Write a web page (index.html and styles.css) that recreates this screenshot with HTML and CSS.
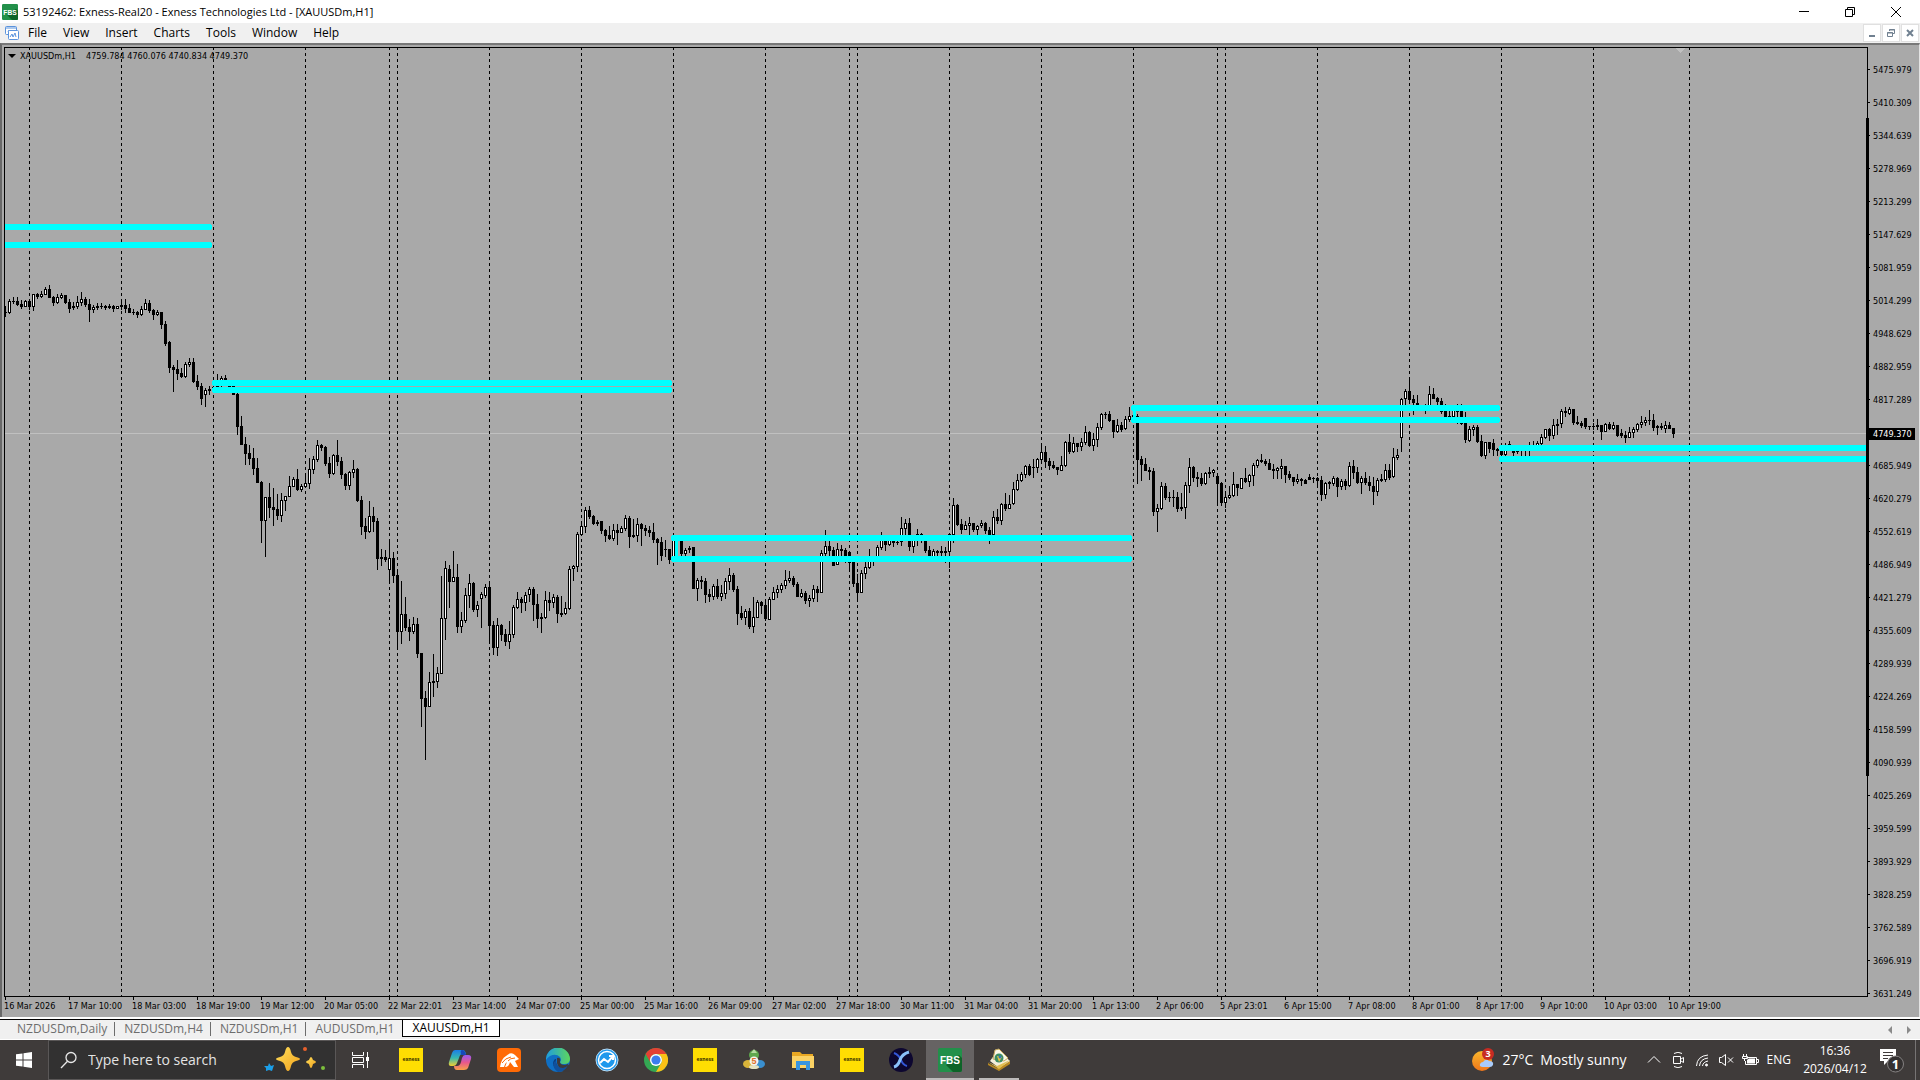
FILE: index.html
```html
<!DOCTYPE html>
<html lang="en">
<head>
<meta charset="utf-8">
<title>53192462: Exness-Real20 - Exness Technologies Ltd - [XAUUSDm,H1]</title>
<link rel="stylesheet" href="styles.css">
</head>
<body>
<svg class="symbols" aria-hidden="true">
  <symbol id="fbs" viewBox="0 0 24 24">
    <rect width="24" height="24" rx="2" fill="#22904a"/>
    <path d="M8 17 L21 7 L24 10 V22 Q24 24 22 24 H15 Z" fill="#0d6428"/>
    <text x="12" y="16" text-anchor="middle" class="fbs-text">FBS</text>
  </symbol>
  <symbol id="exness" viewBox="0 0 24 24">
    <rect width="24" height="24" fill="#ffde02"/>
    <text x="12" y="13" text-anchor="middle" class="exness-text">exness</text>
  </symbol>
</svg>

<header class="titlebar">
  <svg class="app-icon"><use href="#fbs"/></svg>
  <h1 class="title">53192462: Exness-Real20 - Exness Technologies Ltd - [XAUUSDm,H1]</h1>
  <div class="window-buttons">
    <button class="window-button" aria-label="Minimize"><svg width="12" height="12"><path d="M1 5.500H11" /></svg></button>
    <button class="window-button" aria-label="Restore"><svg width="12" height="12"><path d="M1.500 3.500H8.500V10.500H1.500ZM3.500 3V1.500H10.500V8.500H9"/></svg></button>
    <button class="window-button" aria-label="Close"><svg width="12" height="12"><path d="M1 1L11 11M11 1L1 11"/></svg></button>
  </div>
</header>

<nav class="menubar">
  <svg class="mdi-icon" width="16" height="16" viewBox="0 0 16 16" fill="#fff" stroke="#5b93dc">
    <rect x="1.500" y="1.500" width="11" height="8" rx="1"/><path d="M1.500 3H12.500M4 7l1-2 1 2 1-2"/>
    <rect x="4.500" y="5.500" width="10" height="9" rx="1"/><path d="M6 12l2-3 1 3 2-4 1 4" fill="none"/>
  </svg>
  <button class="menu">File</button><button class="menu">View</button><button class="menu">Insert</button><button class="menu">Charts</button><button class="menu">Tools</button><button class="menu">Window</button><button class="menu">Help</button>
  <div class="mdi-buttons">
    <button class="mdi-button" aria-label="Minimize chart"><svg width="10" height="10"><path d="M2 8H8" stroke-width="2"/></svg></button>
    <button class="mdi-button" aria-label="Restore chart"><svg width="10" height="10"><path d="M1.500 4.500H6.500V8.500H1.500ZM1 5H7M3.500 3V1.500H8.500V5.500H7M3 2H9"/></svg></button>
    <button class="mdi-button" aria-label="Close chart"><svg width="10" height="10"><path d="M2 2L8 8M8 2L2 8" stroke-width="2"/></svg></button>
  </div>
</nav>

<main class="chart">
  <section class="plot" aria-label="XAUUSDm H1 price chart">
    <svg class="canvas" id="canvas">
      <path d="M0 385.500H4000" stroke="#c0c0c0"/>
      <path id="days" stroke="#000" stroke-dasharray="3 3" stroke-dashoffset="1"/>
      <path id="dark" fill="#000"/>
      <path id="light" fill="#fff"/>
      <g stroke="#0ff" stroke-width="6" stroke-linecap="round">
        <path d="M-9 179H204M-9 197H204"/>
        <path d="M210 335H664M210 342H664"/>
        <path d="M669 490H1124M669 511H1124"/>
        <path d="M1129 360H1492M1129 372H1492"/>
        <path d="M1497 400H4000M1497 411H4000"/>
      </g>
      <path d="M671 493V508M1129.500 362V370" stroke="#0ff" stroke-width="3"/>
      <path d="M1670 0H1680L1675 5Z" fill="#c0c0c0"/>
    </svg>
    <p class="quote"><svg width="8" height="4"><path d="M0 0H8L4 4Z"/></svg><span>XAUUSDm,H1</span><span class="ohlc">4759.784 4760.076 4740.834 4749.370</span></p>
    <div class="range-bar"></div>
  </section>
  <ol class="prices" id="prices">
  </ol>
  <output class="last-price">4749.370</output>
  <ol class="times" id="times"></ol>
</main>

<nav class="tabs">
  <a class="tab" href="#">NZDUSDm,Daily</a><a class="tab" href="#">NZDUSDm,H4</a><a class="tab" href="#">NZDUSDm,H1</a><a class="tab" href="#">AUDUSDm,H1</a><a class="tab current" href="#">XAUUSDm,H1</a>
  <div class="scrollers">
    <button class="scroller" aria-label="Previous tabs"><svg width="4" height="8"><path d="M4 0V8L0 4Z"/></svg></button>
    <button class="scroller" aria-label="Next tabs"><svg width="4" height="8"><path d="M0 0V8L4 4Z"/></svg></button>
  </div>
</nav>

<footer class="taskbar">
  <button class="start" aria-label="Start"><svg width="16" height="16" fill="#fff"><path d="M0 2.300L6.500 1.400V7.500H0ZM7.500 1.200L16 0V7.500H7.500ZM0 8.500H6.500V14.600L0 13.700ZM7.500 8.500H16V16L7.500 14.800Z"/></svg></button>
  <label class="search">
    <svg width="18" height="18" fill="none" stroke="#e8e8e8" stroke-width="1.300"><circle cx="11" cy="6.500" r="5"/><path d="M7.500 10.200L1 17"/></svg>
    <input class="search-input" type="text" placeholder="Type here to search" aria-label="Search">
    <svg width="62" height="28" viewBox="0 0 62 28">
      <defs><linearGradient id="gold" x2="1" y2="1"><stop offset="0" stop-color="#ffe05c"/><stop offset="1" stop-color="#f0a01c"/></linearGradient></defs>
      <path d="M24 1Q26 1 27 6Q28 10 32 11Q36 12 36 13T32 15Q28 16 27 20Q26 25 24 25T21 20Q20 16 16 15Q12 14 12 13T16 11Q20 10 21 6Q22 1 24 1Z" fill="url(#gold)"/>
      <path d="M47 11Q48 11 49 14Q52 15 52 16T49 18Q48 22 47 22T45 18Q42 17 42 16T45 14Q46 11 47 11Z" fill="url(#gold)"/>
      <path d="M5 17L7 20L10 19L9 22L8 25L5 24L2 25L2 22L0 20L4 20Z" fill="#1c9fe8"/>
      <circle cx="41" cy="3" r="2" fill="#e8602c"/><circle cx="59" cy="22" r="2" fill="#7cbf3c"/>
    </svg>
  </label>
  <button class="task-view" aria-label="Task View"><svg width="18" height="16" fill="none" stroke="#fff"><path d="M1.500 0V3.500H12.500V0M1.500 16V12.500H12.500V16M1.500 5.500H12.500V10.500H1.500ZM16.500 0V16"/><path d="M15 5H18V9H15Z" fill="#fff" stroke="none"/></svg></button>
  <div class="apps">
    <button class="app" aria-label="Exness"><svg><use href="#exness"/></svg></button>
    <button class="app" aria-label="Copilot"><svg viewBox="0 0 24 24">
      <defs><linearGradient id="cp1" x2="0" y2="1"><stop offset="0" stop-color="#1b7de8"/><stop offset=".5" stop-color="#36b8b0"/><stop offset="1" stop-color="#f3cf30"/></linearGradient><linearGradient id="cp2" x2="0" y2="1"><stop offset="0" stop-color="#9a5af0"/><stop offset=".5" stop-color="#e8588c"/><stop offset="1" stop-color="#f8a048"/></linearGradient></defs>
      <path d="M7 2H15Q17 2 18 6H14Q12 6 11 10L9 15Q8 18 5 18H3Q0 18 1 14L4 5Q5 2 7 2Z" fill="url(#cp1)"/>
      <path d="M14 2Q17 2 18 7H13Q12 2 14 2Z" fill="#1748b8"/>
      <path d="M17 7H20Q24 7 23 11L20 20Q19 22 16 22H9Q6 22 6 18H9Q12 18 13 14L14 10Q15 7 17 7Z" fill="url(#cp2)"/>
    </svg></button>
    <button class="app" aria-label="Lion trader"><svg viewBox="0 0 24 24"><rect width="24" height="24" rx="4" fill="#ff6a06"/><path d="M3 19Q4 11 9 8Q14 3 18 7L22 11L18 13L21 19H17L13 14Q12 19 8 19L10 14Q8 15 7 19Z" fill="#fff"/><path d="M5 15Q8 10 14 9M11 13Q13 10 18 10" fill="none" stroke="#ff6a06"/></svg></button>
    <button class="app" aria-label="Edge"><svg viewBox="0 0 24 24">
      <defs><linearGradient id="ed"><stop offset="0" stop-color="#1e9de0"/><stop offset="1" stop-color="#5ed65c"/></linearGradient></defs>
      <circle cx="12" cy="12" r="12" fill="#0f6fc4"/><path d="M0 12A12 12 0 0 1 24 11Q24 16 18 16Q14 16 14 14Q16 12 14 9Q10 5 4 8Q1 10 0 12Z" fill="url(#ed)"/>
      <path d="M9 11Q5 15 9 20Q13 24 20 20Q14 21 11 17Q9 14 10 11Z" fill="#0b3f82"/><path d="M11 10Q15 9 14 14Q14 17 19 17L22 16L24 19V24H19Q12 20 11 15Z" fill="#3d393a"/><path d="M10 13Q10 20 17 20Q20 20 22 17Q19 24 12 24Q6 20 8 14Z" fill="#10509c"/>
    </svg></button>
    <button class="app" aria-label="Market"><svg viewBox="0 0 24 24"><circle cx="12" cy="12" r="11" fill="#1e98ec" stroke="#b9dcf5"/><circle cx="12" cy="12" r="8.500" fill="none" stroke="#fff" stroke-width="1.500"/><path d="M5 15L9 11L13 14L18 8M14 8H18V12" fill="none" stroke="#fff" stroke-width="2"/></svg></button>
    <button class="app" aria-label="Chrome"><svg viewBox="0 0 24 24"><circle cx="12" cy="12" r="12" fill="#34a853"/><path d="M1.600 6A12 12 0 0 1 22.400 6H12A6 6 0 0 0 6.800 15Z" fill="#e34133"/><path d="M22.400 6A12 12 0 0 1 12 24L17.200 15A6 6 0 0 0 12 6Z" fill="#fbc116"/><circle cx="12" cy="12" r="6" fill="#fff"/><circle cx="12" cy="12" r="4.600" fill="#3b7ded"/></svg></button>
    <button class="app" aria-label="Exness terminal"><svg><use href="#exness"/></svg></button>
    <button class="app" aria-label="MetaTrader 5"><svg viewBox="0 0 24 24"><circle cx="12" cy="7" r="5" fill="#5fa84e"/><path d="M12 1L15 5H9Z" fill="#b7dca2"/><ellipse cx="6" cy="16" rx="5" ry="4" fill="#d9b43a"/><ellipse cx="18" cy="16" rx="5" ry="4" fill="#3a8fcf"/><ellipse cx="12" cy="19" rx="5" ry="2" fill="#e7e2c0"/><circle cx="12" cy="13" r="4.500" fill="#f4f4ee"/><text x="12" y="16" text-anchor="middle" class="mt-text">5</text></svg></button>
    <button class="app" aria-label="File Explorer"><svg viewBox="0 0 24 24"><path d="M1 4H9L11 6H22V20H1Z" fill="#e9a823"/><path d="M1 8H23V20H1Z" fill="#fbd264"/><path d="M5 13H19V22H15V17H9V22H5Z" fill="#3795e0"/></svg></button>
    <button class="app" aria-label="Exness trader"><svg><use href="#exness"/></svg></button>
    <button class="app" aria-label="X terminal"><svg viewBox="0 0 24 24"><circle cx="12" cy="12" r="12" fill="#0d0730"/><path d="M5 5Q10 7 12 12T18 18" fill="none" stroke="#3457d8" stroke-width="2"/><path d="M20 4Q13 6 11 12T5 19" fill="none" stroke="#8ac0fb" stroke-width="3"/></svg></button>
    <button class="app active" aria-label="FBS terminal"><svg><use href="#fbs"/></svg></button>
    <button class="app open" aria-label="MetaEditor"><svg viewBox="0 0 24 24"><path d="M1 15L10 20L23 13V16L12 23L1 17Z" fill="#b98a22"/><path d="M3 13L11 2L23 13L12 20Z" fill="#f3eed8"/><path d="M1 14L10 18L23 12L12 21Z" fill="#e2bf52"/><path d="M8 2L12 1L21 10L17 13L6 11Z" fill="#fbf8e8" stroke="#c3a75c"/><circle cx="12" cy="10" r="4.500" fill="#3d8e62"/><path d="M10 8L15 9L12 14Z" fill="#e9c341"/><circle cx="13" cy="9" r="1.500" fill="#3478bc"/></svg></button>
  </div>
  <div class="tray">
    <button class="weather"><svg width="24" height="24" viewBox="0 0 24 24"><defs><linearGradient id="sun" x2="0" y2="1"><stop offset="0" stop-color="#f9b62c"/><stop offset="1" stop-color="#f0761a"/></linearGradient></defs><circle cx="11" cy="13" r="10" fill="url(#sun)"/><path d="M12 19Q8 19 9 16Q10 14 12 14Q15 10 18 13Q23 13 22 17Q21 19 19 19Z" fill="#a9cbfa"/><circle cx="17" cy="6" r="6" fill="#c72b22"/><text x="17" y="9" text-anchor="middle" class="badge-text">3</text></svg><span>27°C</span><span>Mostly sunny</span></button>
    <button class="tray-icon" aria-label="Show hidden icons"><svg width="16" height="16"><path d="M2 10.500L8 4.500L14 10.500"/></svg></button>
    <button class="tray-icon" aria-label="Meet Now"><svg width="16" height="16"><path d="M3.500 4.500H10.500V11.500H3.500ZM11 7L13.500 5.500V10.500L11 9M4 1.500Q8-1 12 1.500M4 14.500Q8 17 12 14.500"/></svg></button>
    <button class="tray-icon" aria-label="Wi-Fi"><svg width="16" height="16"><path d="M2.500 14Q3 4 14 3M5.500 14Q6 7 14 6M8.500 14Q9 10 14 9"/><circle cx="12.500" cy="13" r="1" fill="#fff"/></svg></button>
    <button class="tray-icon" aria-label="Volume muted"><svg width="16" height="16"><path d="M1.500 5.500H3.500L7.500 2.500V13.500L3.500 10.500H1.500ZM10 5.500L15 10.500M15 5.500L10 10.500"/></svg></button>
    <button class="tray-icon" aria-label="Battery"><svg width="18" height="16"><path d="M5.500 5.500H15.500V12.500H4.500V9M16 7.500H17.500V10.500H16M2.500 2V4M5.500 2V4M1.500 4.500H6.500V6.500H1.500ZM3.500 7V9"/><path d="M6 8L8 6.500H14V11.500H6Z" fill="#fff" stroke="none"/></svg></button>
    <button class="language">ENG</button>
    <button class="clock"><time>16:36</time><time>2026/04/12</time></button>
    <button class="notifications" aria-label="Notifications"><svg width="26" height="26"><path d="M1 2H17V14H9L5 18V14H1Z" fill="#fff"/><path d="M4 5.500H14M4 8.500H14M4 11.500H9" stroke="#3f3b3b"/><circle cx="16.500" cy="17" r="8" fill="#343131" stroke="#858282"/><text x="16.500" y="22" text-anchor="middle" class="count-text">1</text></svg></button>
  </div>
</footer>
<script src="chart.js"></script>
</body>
</html>
```

FILE: styles.css
```css
* { box-sizing: border-box; }

body {
  margin: 0;
  height: 100vh;
  display: flex;
  flex-direction: column;
  overflow: hidden;
  background: #f0f0f0;
  color: #000;
  font: 12px/16px "Open Sans", "Noto Sans", sans-serif;
}

button {
  margin: 0;
  padding: 0;
  border: 0;
  background: none;
  color: inherit;
  font: inherit;
}

svg { display: block; flex: none; }
.symbols { display: none; }
.fbs-text { font: bold 10px "Liberation Sans", sans-serif; fill: #fff; }
.exness-text { font: bold 5px "Open Sans", sans-serif; fill: #3a3400; }
.mt-text { font: bold 9px "Liberation Sans", sans-serif; fill: #e0702a; }
.badge-text { font: bold 9px "Open Sans", sans-serif; fill: #fff; }
.count-text { font: bold 13px "Open Sans", sans-serif; fill: #fff; }

/* Title bar */
.titlebar {
  flex: none;
  height: 23px;
  display: flex;
  align-items: center;
  padding: 0 1px 0 2px;
  background: #fff;
}
.app-icon { width: 16px; height: 16px; }
.title { margin: 0 0 0 5px; font-size: 11px; font-weight: 400; white-space: nowrap; }
.window-buttons { margin-left: auto; display: flex; height: 100%; }
.window-button {
  width: 46px;
  display: grid;
  place-items: center;
}
.window-button svg { fill: none; stroke: #000; }

/* Menu bar */
.menubar {
  flex: none;
  height: 20px;
  display: flex;
  align-items: center;
  padding: 0 1px 0 4px;
}
.mdi-icon { margin-right: 1px; }
.menu { padding: 0 8px; }
.mdi-icon + .menu { padding-left: 7px; }
.mdi-buttons { margin-left: auto; display: flex; gap: 1px; }
.mdi-button {
  width: 18px;
  height: 18px;
  display: grid;
  place-items: center;
  border: 1px solid #e0e0e0;
  background: #fff;
}
.mdi-button svg { fill: none; stroke: #708090; }

/* Chart window */
.chart {
  flex: 1;
  min-height: 0;
  position: relative;
  display: grid;
  grid-template-columns: 1fr 51px;
  grid-template-rows: 1fr 20px;
  padding: 2px 0 0 2px;
  border: solid #696969;
  border-width: 2px 1px 0 2px;
  border-top-color: #787878;
  border-right-color: #e3e3e3;
  background: #a9a9a9;
  font: 9px/12px "DejaVu Sans Condensed", "Noto Sans", sans-serif;
}
.plot { position: relative; border: 1px solid #000; min-width: 0; min-height: 0; }
.canvas { position: absolute; inset: 0; width: 100%; height: 100%; shape-rendering: crispEdges; }
.quote { position: relative; display: flex; align-items: center; gap: 4px; margin: 2px 0 0 3px; }
.ohlc { margin-left: 6px; }
.range-bar { position: absolute; right: -2px; top: 70px; width: 3px; height: 658px; background: #000; }

.prices, .times { margin: 0; padding: 0; list-style: none; overflow: hidden; }
.prices { padding-top: 6px; }
.price { height: 33px; display: flex; align-items: center; gap: 3px; }
.price::before { content: ""; width: 2px; height: 1px; background: #000; }
.last-price {
  position: absolute;
  right: 4px;
  top: 383px;
  width: 46px;
  height: 12px;
  padding-left: 4px;
  background: #000;
  color: #fff;
}
.times { grid-column: 1 / -1; display: flex; }
.time { flex: none; width: 64px; white-space: nowrap; }
.time::before { content: ""; display: block; width: 1px; height: 3px; margin-left: 1px; background: #000; }

/* Chart tabs */
.tabs {
  flex: none;
  height: 23px;
  display: flex;
  padding-top: 1px;
  border: solid #fff;
  border-width: 2px 0 1px;
  box-shadow: inset 0 1px 0 #000;
  color: #6d6d6d;
}
.tab {
  display: flex;
  align-items: center;
  height: 17px;
  padding: 0 8px 0 9px;
  color: inherit;
  text-decoration: none;
}
.tab:first-child { padding-left: 17px; }
.tab:not(.current) { position: relative; }
.tab:nth-child(-n+3)::after { content: ""; position: absolute; right: 0; top: 2px; width: 1px; height: 14px; background: #6d6d6d; }
.tab.current {
  border: solid #000;
  border-width: 0 1px 1px;
  padding: 0 9px;
  background: #fff;
  color: #000;
}
.scrollers { margin-left: auto; display: flex; gap: 15px; padding-right: 9px; }
.scroller svg { fill: #8a8a8a; }

/* Taskbar */
.taskbar {
  flex: none;
  height: 40px;
  display: flex;
  background: #3f3b3a;
  color: #fff;
  font-size: 14px;
  line-height: 20px;
}
.start, .task-view { width: 48px; display: grid; place-items: center; }
.search {
  width: 288px;
  display: flex;
  align-items: center;
  gap: 10px;
  padding: 0 9px 0 11px;
  border: 1px solid #5a5757;
  background: #323131;
}
.search-input {
  flex: 1;
  min-width: 0;
  padding: 0;
  border: 0;
  outline: 0;
  background: none;
  color: #e4e4e4;
  font: inherit;
}
.search-input::placeholder { color: #e4e4e4; opacity: 1; }
.apps { display: flex; gap: 1px; padding-left: 3px; }
.app { width: 48px; display: grid; place-items: center; }
.app svg { width: 24px; height: 24px; }
.active { background: #666363; box-shadow: inset 0 -2px #bdbaba; }
.open { background: linear-gradient(#bdbaba, #bdbaba) center bottom / 40px 2px no-repeat; }

.tray { margin-left: auto; margin-right: 4px; padding-right: 6px; border-right: 1px solid #777474; display: flex; align-items: center; }
.weather { display: flex; align-items: center; gap: 7px; margin-right: 15px; }
.tray-icon { width: 24px; display: grid; place-items: center; }
.tray-icon svg { fill: none; stroke: #fff; }
.language { margin-left: 5px; font-size: 12px; }
.clock { width: 64px; margin: 0 12px; display: grid; justify-items: center; font-size: 12px; line-height: 18px; }
.notifications { margin-right: 4px; }
```

FILE: chart.js
```js
// Each run of candles starts at x, with its rows "high top bottom low colour"
// measured from y in thirds of a pixel; u is a rising bar, d a falling one.
const runs = [
  { x: 0, y: 222, rows: `108 126 129 140 d,87 93 129 132 u,81 93 96 102 d,81 93 105 108 d,90 102 110 117 d,90 93 110 111 u,87 93 111 120 d,72 72 111 123 u,69 72 81 87 d,63 72 81 84 u,51 57 75 75 u,45 57 84 84 d,78 81 99 108 d,72 81 99 102 u,69 75 84 87 u,75 75 99 102 d,87 96 117 129 d,96 108 114 120 d,78 96 111 117 u,66 87 99 108 u,81 87 105 111 d,87 102 120 156 d,105 111 120 129 u,99 108 114 120 d,99 108 111 117 d,105 108 114 120 d,102 108 114 117 d,105 108 117 126 d,108 108 117 117 u,87 105 111 120 d,87 105 117 129 d,102 114 129 129 d,117 126 129 135 d,123 126 135 144 d,108 117 135 138 u,87 99 120 120 u,90 99 123 129 d,117 120 135 150 d,120 126 135 138 u,126 126 165 177 d,153 162 222 228 d,213 216 294 309 d,285 291 300 366 d,270 297 312 330 d,294 309 321 324 d,276 282 321 324 u,264 276 285 291 u,264 276 336 339 d,315 333 351 360 d,339 348 387 405 d,354 360 375 411 u,348 357 363 375 d,342 350 360 370 u,312 330 352 360 u,318 324 348 352 u,315 324 333 345 d,332 335 350 355 d,340 345 375 375 d,366 372 471 495 d,438 468 525 525 d,501 522 552 585 d,525 549 567 585 d,534 564 597 615 d,564 594 639 639 d,633 636 753 819 d,681 681 753 861 u,639 681 714 744 d,654 711 720 768 d,672 717 738 750 d,669 690 738 756 u,678 678 693 723 u,618 648 681 681 u,621 627 651 651 u,597 627 660 663 d,642 648 660 666 u,609 639 651 654 u,564 597 642 657 u,558 567 600 612 u,510 525 570 576 u,522 525 534 543 d,528 531 582 588 d,561 579 612 624 d,552 555 612 615 u,510 555 576 588 d,561 573 615 627 d,609 612 648 660 d,603 606 648 660 u,570 597 609 624 u,594 597 693 696 d,678 690 771 795 d,744 768 786 807 d,693 738 786 789 u,711 738 756 786 d,744 753 867 900 d,837 861 867 888 d,840 861 870 876 d` },
  { x: 384, y: 352, rows: `420 474 510 549 u,456 474 528 549 d,507 525 696 750 d,543 642 696 732 u,591 642 684 693 d,657 681 696 723 d,651 672 696 702 u,654 672 762 774 d,759 759 897 981 d,873 894 921 1080 d,816 846 921 921 u,762 843 849 891 d,801 819 846 864 u,528 654 822 822 u,483 504 657 720 u,495 507 546 624 d,453 531 546 546 u,492 531 681 699 d,636 660 681 699 u,564 585 663 669 u,522 549 588 624 u,546 549 630 636 d,603 615 630 651 u,576 582 597 684 u,552 561 588 594 u,543 561 678 732 d,663 675 744 765 d,654 675 744 768 u,672 675 705 723 d,687 702 726 738 d,663 702 726 747 u,615 621 705 714 u,576 597 624 627 u,591 597 609 639 d,576 585 609 633 u,561 567 585 606 u,561 567 615 663 d,582 612 657 684 d,639 651 657 699 d,573 600 654 657 u,576 600 609 633 d,582 591 609 624 u,585 591 642 669 d,588 639 645 651 d,606 624 642 645 u,498 507 627 630 u,495 498 507 543 u,396 402 501 516 u,363 378 405 405 u,321 330 381 399 u,318 330 351 357 d,345 348 372 375 d,360 366 372 378 d,363 363 393 402 d,387 390 408 426 d,378 405 417 420 d,372 390 417 423 u,372 390 399 435 d,378 384 399 399 u,345 354 387 393 u,348 354 411 444 d,357 405 411 414 d,354 372 408 426 u,369 372 387 438 d,375 384 393 408 d,378 390 399 411 d,369 396 420 429 d,414 417 429 495 d,411 426 468 483 d,420 447 450 471 d,447 447 480 492 d,405 420 480 485 u,415 420 423 444 d,420 423 462 470 d,444 450 462 470 u,438 444 450 459 d,441 441 567 567 d,534 540 567 603 u,528 540 546 567 d,534 543 585 609 d,567 582 591 606 d,552 558 591 600 u,537 558 591 597 d,555 579 591 603 u,534 543 582 597 u,504 525 546 570 u,519 525 570 576 d,558 567 642 675 d,618 639 654 660 d,627 633 654 675 u,624 633 681 687 d,591 651 681 699 u,600 606 654 654 u,603 606 618 642 d` },
  { x: 760, y: 432, rows: `357 375 417 423 d,351 357 420 420 u,321 336 360 360 u,315 327 339 354 u,309 315 330 339 u,270 300 318 327 u,273 294 303 309 u,288 294 315 321 d,306 312 351 351 d,327 339 351 354 u,333 339 363 372 d,345 354 363 381 u,315 327 357 366 u,318 327 339 366 d,210 219 339 339 u,150 198 222 230 u,180 198 213 235 d,201 210 258 258 d,189 207 255 255 u,195 207 213 230 d,204 210 230 249 d,213 216 249 273 d,240 246 312 321 d,282 309 339 363 d,270 279 339 339 u,246 261 282 297 u,207 240 264 267 u,235 240 246 258 d,195 201 235 240 u,156 180 204 210 u,175 180 195 213 d,175 180 195 198 u,175 183 189 201 d,183 186 189 195 d,111 144 186 198 u,117 129 147 165 u,114 129 201 213 d,175 180 201 219 u,147 162 165 198 d,159 162 183 189 d,180 183 213 219 d,198 210 230 235 d,207 213 230 235 u,210 213 219 228 d,198 213 219 228 d,201 213 219 249 d,159 162 216 264 u,54 75 165 189 u,72 75 135 138 d,117 132 150 162 d,123 135 150 150 u,111 129 138 165 u,129 129 150 156 d,135 138 150 165 u,120 129 138 144 u,126 129 153 162 d,141 150 165 192 d` },
  { x: 988, y: 332, rows: `393 411 465 465 u,387 411 423 432 d,369 372 423 435 u,339 372 387 393 d,345 372 387 387 u,306 327 372 375 u,282 300 330 333 u,276 282 303 306 u,255 258 285 294 u,252 258 285 288 d,237 261 264 294 d,234 237 264 279 u,192 216 240 252 u,198 216 246 264 d,234 243 258 270 d,243 255 264 267 d,261 261 270 285 d,228 255 273 273 u,183 186 258 261 u,162 186 216 222 d,171 189 216 219 u,189 189 201 216 d,174 186 201 213 u,138 156 189 195 u,153 156 198 201 d,159 177 198 213 u,129 141 180 201 u,99 102 144 150 u,96 102 105 117 d,93 102 123 126 d,120 120 156 174 d,117 135 156 159 u,126 135 150 156 d,108 117 147 150 u,81 108 120 126 u,95 105 111 115 d,102 108 240 312 d,228 237 255 303 d,234 252 273 273 d,261 270 276 300 d,264 273 396 408 d,372 384 396 456 u,306 318 387 390 u,309 318 354 360 d,336 351 354 366 d,330 351 354 381 d,336 351 387 396 d,339 381 387 393 d,306 315 384 417 u,234 261 318 339 u,258 261 294 306 d,276 291 297 321 d,279 294 312 318 d,276 279 312 315 u,261 276 282 294 d,267 270 279 291 u,279 288 312 378 d,306 309 369 378 d,333 351 369 384 u,318 345 354 357 u,276 312 348 351 u,312 312 324 348 d,294 294 327 327 u,264 294 306 309 d,282 285 306 321 u,249 255 288 318 u,237 240 258 264 u,222 240 246 249 d,237 243 252 258 d,237 249 270 270 d,252 267 273 297 d,261 264 273 297 u,237 258 267 297 u,258 258 285 309 d,273 282 294 300 d,291 291 306 318 d,282 297 306 312 u,294 297 303 318 d,297 300 312 312 d,282 291 300 300 d,291 294 297 309 d` },
  { x: 1312, y: 322, rows: `321 324 333 345 d,318 330 375 393 d,336 339 375 387 u,333 336 342 357 d,318 324 342 348 u,321 324 351 381 d,327 333 351 360 u,327 333 348 360 d,276 288 348 351 u,270 288 309 327 d,291 306 339 342 d,318 324 339 372 u,306 324 339 345 d,318 336 348 363 d,321 348 366 405 d,324 330 366 378 u,312 327 333 336 d,282 300 330 336 u,282 300 324 330 d,234 261 321 324 u,237 255 264 270 u,84 87 204 246 u,57 63 87 105 u,21 63 90 102 d,75 87 99 135 d,75 99 108 115 d,105 108 115 120 d,102 108 120 132 d,48 72 108 115 u,54 72 87 87 d,81 84 96 105 d,84 93 126 132 d,102 108 141 145 d,120 138 141 145 d,115 118 141 145 u,102 108 125 162 d,102 108 162 165 d,126 159 210 219 d,168 177 213 216 u,165 171 180 198 u,165 171 216 219 d,195 213 258 261 d,216 216 258 267 u,216 216 237 249 d,207 219 240 258 d,234 237 243 258 d,240 240 255 258 d,219 225 255 258 u,213 222 240 243 d,235 240 249 258 d,235 243 246 252 d,228 235 243 258 d,228 235 243 258 d,216 235 243 258 d,213 225 230 240 u,213 219 228 230 u,192 201 222 225 u,177 177 204 207 u,174 177 198 213 d,147 165 198 207 u,147 162 168 195 d,117 123 162 174 u,111 123 129 141 d,111 117 132 135 u,117 117 159 165 d,138 156 162 165 d,153 159 168 174 d,144 144 171 177 d,168 168 171 180 d,159 168 171 180 d,147 165 171 180 d,165 165 186 210 d,159 162 186 186 u,156 162 177 180 d,156 165 177 180 u,165 165 198 201 d,177 189 198 204 d,183 195 204 219 d,171 186 204 204 u,171 177 189 204 u,159 162 180 186 u,138 156 165 174 u,141 150 159 168 u,120 150 153 165 d,132 150 174 183 d,165 168 174 195 d,159 168 174 180 d,153 165 177 189 u,156 165 177 177 d,174 174 192 204 d` }
];

const box = (x, y, w, h) => `M${x} ${y}h${w}v${h}h${-w}z`;
let dark = "";
let light = "";
for (const run of runs) {
  run.rows.split(",").forEach((row, i) => {
    const parts = row.split(" ");
    const [high, top, bottom, low] = parts.slice(0, 4).map(v => run.y + Math.round(v / 3));
    const x = run.x + i * 4;
    // Wick above and below, then the body, so the shapes never overlap.
    if (top > high) dark += box(x, high, 1, top - high);
    if (low > bottom) dark += box(x, bottom, 1, low - bottom);
    dark += box(x - 1, top, 3, bottom - top);
    if (parts[4] === "u" && bottom - top > 2) light += box(x, top + 1, 1, bottom - top - 2);
  });
}
document.getElementById("dark").setAttribute("d", dark);
document.getElementById("light").setAttribute("d", light);

const days = [24, 116, 208, 300, 384, 392, 484, 576, 668, 760, 844, 852, 944, 1036, 1128, 1212, 1220, 1312, 1404, 1496, 1588, 1684];
document.getElementById("days").setAttribute("d", days.map(x => `M${x + 0.5} 0V2000`).join(""));

const fill = (id, name, labels) => {
  const list = document.getElementById(id);
  for (const label of labels) {
    const item = document.createElement("li");
    item.className = name;
    item.textContent = label;
    list.append(item);
  }
};
fill("prices", "price", "5475.979 5410.309 5344.639 5278.969 5213.299 5147.629 5081.959 5014.299 4948.629 4882.959 4817.289 4751.619 4685.949 4620.279 4552.619 4486.949 4421.279 4355.609 4289.939 4224.269 4158.599 4090.939 4025.269 3959.599 3893.929 3828.259 3762.589 3696.919 3631.249".split(" "));
fill("times", "time", "16 Mar 2026,17 Mar 10:00,18 Mar 03:00,18 Mar 19:00,19 Mar 12:00,20 Mar 05:00,22 Mar 22:01,23 Mar 14:00,24 Mar 07:00,25 Mar 00:00,25 Mar 16:00,26 Mar 09:00,27 Mar 02:00,27 Mar 18:00,30 Mar 11:00,31 Mar 04:00,31 Mar 20:00,1 Apr 13:00,2 Apr 06:00,5 Apr 23:01,6 Apr 15:00,7 Apr 08:00,8 Apr 01:00,8 Apr 17:00,9 Apr 10:00,10 Apr 03:00,10 Apr 19:00".split(","));
```
